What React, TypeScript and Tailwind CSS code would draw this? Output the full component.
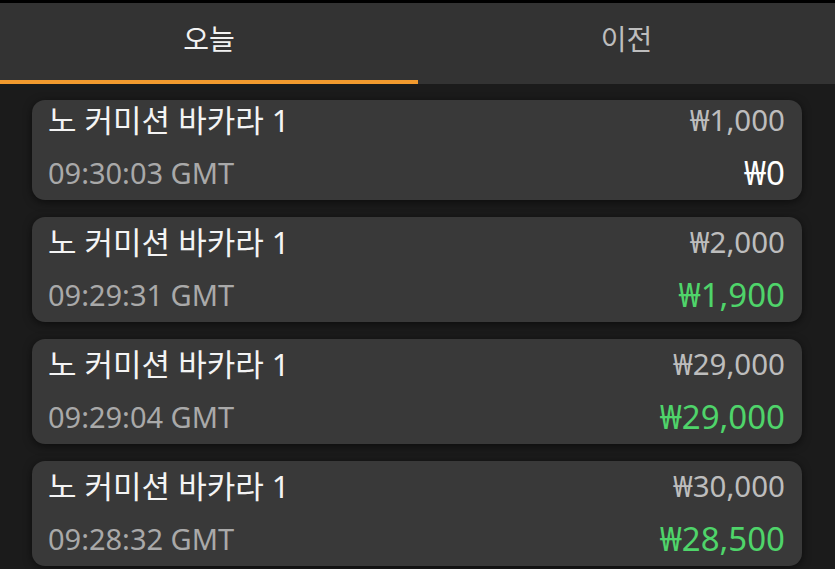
import React from "react";

type Row = {
  time: string;
  bet: string;
  win: string;
  green: boolean;
  first?: boolean;
};

const rows: Row[] = [
  { time: "09:30:03 GMT", bet: "₩1,000", win: "₩0", green: false, first: true },
  { time: "09:29:31 GMT", bet: "₩2,000", win: "₩1,900", green: true },
  { time: "09:29:04 GMT", bet: "₩29,000", win: "₩29,000", green: true },
  { time: "09:28:32 GMT", bet: "₩30,000", win: "₩28,500", green: true },
];

function Card({ r }: { r: Row }) {
  return (
    <div
      className={
        "flex flex-col rounded-[13px] bg-[#393939] pl-[16px] pr-[17px] pb-[10px] shadow-[0_2px_8px_rgba(0,0,0,0.55)] " +
        (r.first ? "pt-[2px]" : "pt-[7px]")
      }
    >
      <div className="flex h-[36px] items-center justify-between">
        <span className="text-[31px] leading-none text-[#f4f4f4]">노 커미션 바카라 1</span>
        <span className="text-[29.5px] leading-none text-[#bdbdbd]">{r.bet}</span>
      </div>
      <div className="mt-[16px] flex h-[36px] items-center justify-between">
        <span className="text-[29px] leading-none text-[#a9a9a9]">{r.time}</span>
        <span
          className={
            "text-[33px] leading-none " + (r.green ? "text-[#4fd46a]" : "text-[#ffffff]")
          }
        >
          {r.win}
        </span>
      </div>
    </div>
  );
}

export default function App() {
  return (
    <div
      className="flex h-[569px] w-[835px] flex-col overflow-hidden bg-[#1b1b1b]"
      style={{ fontFamily: '"Noto Sans", "Noto Sans CJK KR", sans-serif' }}
    >
      <div className="h-[3px] bg-black" />
      <div className="flex h-[81px] bg-[#333333]">
        <div className="flex w-[418px] flex-col">
          <div className="flex h-[77px] items-center justify-center pb-[6px] text-[28px] text-[#f2f2f2]">
            오늘
          </div>
          <div className="h-[4px] bg-[#f29a2e]" />
        </div>
        <div className="flex flex-1 flex-col">
          <div className="flex h-[77px] items-center justify-center pb-[6px] text-[28px] text-[#bdbdbd]">
            이전
          </div>
          <div className="h-[4px]" />
        </div>
      </div>
      <div className="flex flex-col gap-[17px] px-[32px] pt-[16px] pr-[33px]">
        {rows.map((r, i) => (
          <Card key={i} r={r} />
        ))}
      </div>
    </div>
  );
}
